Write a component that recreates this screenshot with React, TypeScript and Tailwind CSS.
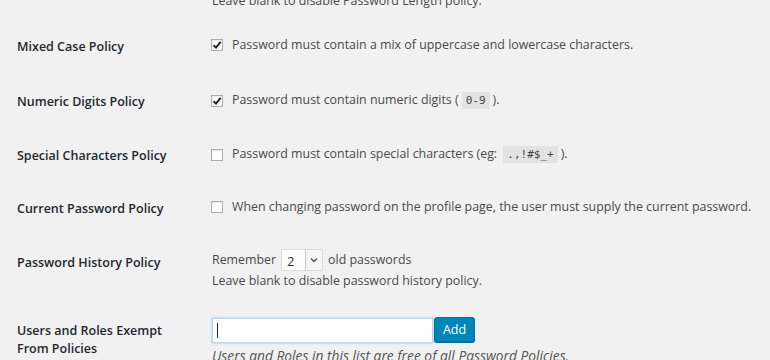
import React from 'react';

const Check = ({ checked }: { checked?: boolean }) => (
  <span className="w-[12px] h-[12px] shrink-0 border border-[#a9aeb3] bg-white flex items-center justify-center shadow-[inset_0_1px_2px_rgba(0,0,0,0.1)]">
    {checked && (
      <svg width="10" height="10" viewBox="0 0 10 10">
        <path d="M1.5 5.2 L4 7.6 L8.6 1.8" fill="none" stroke="#1e1e1e" strokeWidth="1.9" />
      </svg>
    )}
  </span>
);

const Code = ({ children }: { children: React.ReactNode }) => (
  <code className="bg-[#e3e3e3] px-[4px] py-[2px] text-[11px] text-[#444] font-['DejaVu_Sans_Mono',monospace] mx-[3px]">
    {children}
  </code>
);

const Row = ({ label, h, children }: { label: React.ReactNode; h: string; children: React.ReactNode }) => (
  <div className={`flex ${h}`}>
    <div className="w-[195px] shrink-0 pt-[18px] text-[12.5px] leading-[18px] font-semibold text-[#23282d]">{label}</div>
    <div className="pt-[15px] whitespace-nowrap">{children}</div>
  </div>
);

export default function App() {
  return (
    <div className="w-[770px] h-[360px] overflow-hidden bg-[#f1f1f1] font-['Open_Sans',sans-serif] text-[12.4px] leading-[20px] text-[#4a4a4a] pl-[17px]">
      {/* top of previous row, cut off */}
      <div className="flex -mt-[9px] h-[29px]">
        <div className="w-[195px] shrink-0" />
        <div>Leave blank to disable Password Length policy.</div>
      </div>

      <Row label="Mixed Case Policy" h="h-[55px]">
        <label className="flex items-center gap-[9px] -ml-[1px]">
          <Check checked />
          <span>Password must contain a mix of uppercase and lowercase characters.</span>
        </label>
      </Row>

      <Row label="Numeric Digits Policy" h="h-[54px]">
        <label className="flex items-center gap-[9px] -ml-[1px]">
          <Check checked />
          <span>
            Password must contain numeric digits (<Code>0-9</Code>).
          </span>
        </label>
      </Row>

      <Row label="Special Characters Policy" h="h-[53px]">
        <label className="flex items-center gap-[9px] -ml-[1px]">
          <Check />
          <span>
            Password must contain special characters (eg: <Code>.,!#$_+</Code>).
          </span>
        </label>
      </Row>

      <Row label="Current Password Policy" h="h-[53px]">
        <label className="flex items-center gap-[9px] -ml-[1px]">
          <Check />
          <span>When changing password on the profile page, the user must supply the current password.</span>
        </label>
      </Row>

      <div className="flex h-[68px]">
        <div className="w-[195px] shrink-0 pt-[19px] text-[12.5px] leading-[18px] font-semibold text-[#23282d]">
          Password History Policy
        </div>
        <div className="pt-[14px]">
          <div className="flex items-center">
            <span>Remember</span>
            <span className="ml-[5px] mr-[5px] w-[42px] h-[22px] flex border border-[#ddd] bg-white">
              <span className="flex-1 pl-[5px] text-[13px] leading-[22px] text-[#32373c]">2</span>
              <span className="w-[17px] border-l border-[#c8c8c8] bg-[#f5f5f5] flex items-center justify-center">
                <svg width="8" height="6" viewBox="0 0 8 6">
                  <path d="M1 1.5 L4 4.5 L7 1.5" fill="none" stroke="#555" strokeWidth="1.4" />
                </svg>
              </span>
            </span>
            <span>old passwords</span>
          </div>
          <div>Leave blank to disable password history policy.</div>
        </div>
      </div>

      <div className="flex">
        <div className="w-[195px] shrink-0 pt-[19px] text-[12.5px] leading-[18px] font-semibold text-[#23282d]">
          Users and Roles Exempt
          <br />
          From Policies
        </div>
        <div className="pt-[15px]">
          <div className="flex items-start">
            <div className="w-[221px] h-[25px] bg-white border border-[#b9d6ec] shadow-[0_0_2px_rgba(30,140,190,0.5)] flex items-center pl-[4px]">
              <span className="w-px h-[15px] bg-[#222]" />
            </div>
            <button className="ml-[1px] -mt-[1px] w-[41px] h-[25px] bg-[#0085ba] border border-[#0073aa] rounded-[3px] text-white text-[12.5px] leading-[22px] shadow-[0_1px_0_#006799]">
              Add
            </button>
          </div>
          <div className="mt-[3px] italic text-[13.8px] text-[#555] whitespace-nowrap">Users and Roles in this list are free of all Password Policies.</div>
        </div>
      </div>
    </div>
  );
}
